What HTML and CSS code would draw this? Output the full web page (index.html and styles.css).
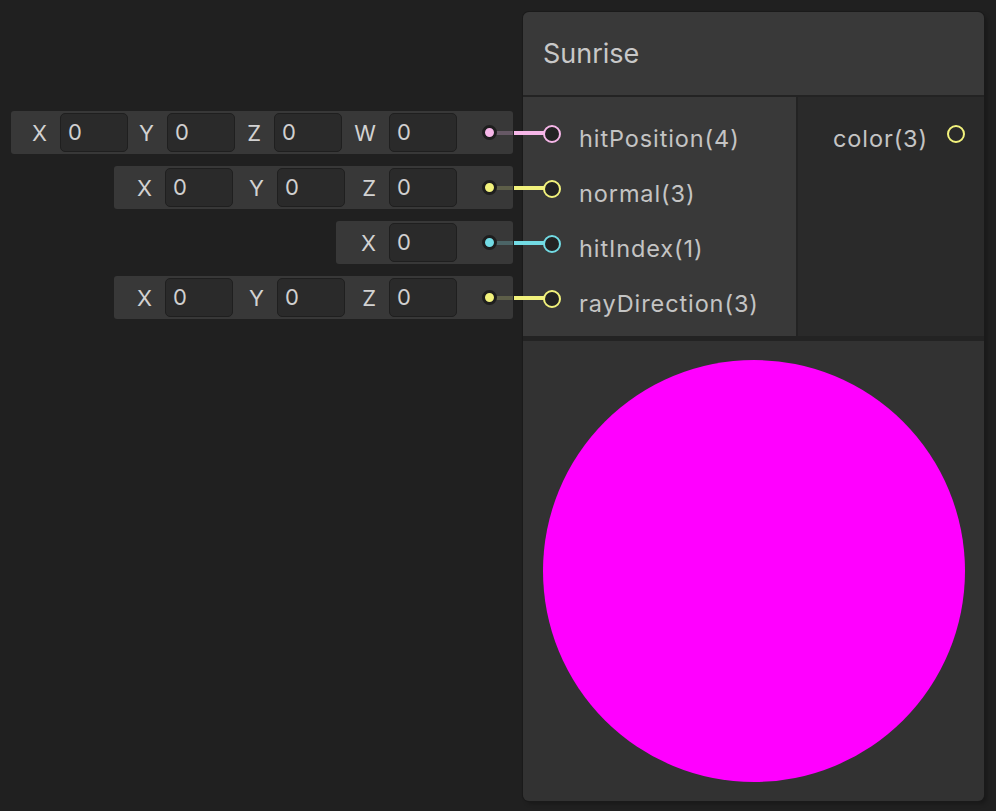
FILE: index.html
```html
<!DOCTYPE html>
<html>
<head>
<meta charset="utf-8">
<link rel="stylesheet" href="styles.css">
</head>
<body>
<div class="canvas">
  <div class="fields">
    <div class="bar vec4">
      <div class="grp"><span class="lbl">X</span><span class="fld">0</span></div>
      <div class="grp"><span class="lbl">Y</span><span class="fld">0</span></div>
      <div class="grp"><span class="lbl">Z</span><span class="fld">0</span></div>
      <div class="grp"><span class="lbl lbl-w">W</span><span class="fld">0</span></div>
      <div class="portarea pink"><span class="dot"></span><span class="wire-dim"></span><span class="wire"></span></div>
    </div>
    <div class="bar vec3">
      <div class="grp"><span class="lbl">X</span><span class="fld">0</span></div>
      <div class="grp"><span class="lbl">Y</span><span class="fld">0</span></div>
      <div class="grp"><span class="lbl">Z</span><span class="fld">0</span></div>
      <div class="portarea yellow"><span class="dot"></span><span class="wire-dim"></span><span class="wire"></span></div>
    </div>
    <div class="bar vec1">
      <div class="grp"><span class="lbl">X</span><span class="fld">0</span></div>
      <div class="portarea cyan"><span class="dot"></span><span class="wire-dim"></span><span class="wire"></span></div>
    </div>
    <div class="bar vec3">
      <div class="grp"><span class="lbl">X</span><span class="fld">0</span></div>
      <div class="grp"><span class="lbl">Y</span><span class="fld">0</span></div>
      <div class="grp"><span class="lbl">Z</span><span class="fld">0</span></div>
      <div class="portarea yellow"><span class="dot"></span><span class="wire-dim"></span><span class="wire"></span></div>
    </div>
  </div>

  <div class="node">
    <div class="header">Sunrise</div>
    <div class="ports">
      <div class="inputs">
        <div class="prow pink"><span class="pcircle"></span><span class="ptext">hitPosition(4)</span></div>
        <div class="prow yellow"><span class="pcircle"></span><span class="ptext">normal(3)</span></div>
        <div class="prow cyan"><span class="pcircle"></span><span class="ptext">hitIndex(1)</span></div>
        <div class="prow yellow"><span class="pcircle"></span><span class="ptext">rayDirection(3)</span></div>
      </div>
      <div class="outputs">
        <div class="orow yellow"><span class="ptext">color(3)</span><span class="pcircle open"></span></div>
      </div>
    </div>
    <div class="preview"><div class="disc"></div></div>
  </div>
</div>
</body>
</html>
```

FILE: styles.css
```css
html, body {
  margin: 0;
  padding: 0;
  background: #202020;
  width: 996px;
  height: 811px;
  overflow: hidden;
  font-family: Inter, "Noto Sans", sans-serif;
}

.canvas {
  display: flex;
  align-items: flex-start;
}

.fields {
  width: 513px;
  padding-top: 111px;
  display: flex;
  flex-direction: column;
  align-items: flex-end;
  gap: 12px;
}

.bar {
  display: flex;
  align-items: center;
  height: 43px;
  background: #383838;
  border-radius: 3px;
}

.vec4 { padding-left: 10px; }
.vec3 { padding-left: 7px; }
.vec1 { padding-left: 9px; }

.grp {
  display: flex;
  align-items: center;
}

.lbl {
  box-sizing: border-box;
  text-align: right;
  padding-right: 13px;
  color: #d2d2d2;
  font-size: 22px;
  width: 44px;
}

.vec4 .lbl { width: 39px; }
.vec4 .lbl-w { width: 47px; }

.fld {
  box-sizing: border-box;
  width: 68px;
  height: 39px;
  background: #2a2a2a;
  border: 1px solid #1f1f1f;
  border-radius: 5px;
  color: #d0d0d0;
  font-size: 22px;
  line-height: 37px;
  padding-left: 7px;
}

.portarea {
  position: relative;
  width: 56px;
  height: 43px;
  display: flex;
  align-items: center;
  padding-left: 25px;
  box-sizing: border-box;
}

.dot {
  position: relative;
  z-index: 2;
  box-sizing: border-box;
  width: 15px;
  height: 15px;
  border-radius: 50%;
  background: var(--c);
  border: 3.5px solid #1e1e1e;
}

.wire-dim {
  position: absolute;
  left: 38px;
  right: 0;
  top: 20px;
  height: 4px;
  background: var(--dim);
}

.wire {
  position: absolute;
  z-index: 3;
  left: 57px;
  width: 30px;
  top: 20px;
  height: 4px;
  background: var(--c);
}

.pink { --c: #f6b6e8; --dim: #665865; }
.yellow { --c: #f2f27c; --dim: #5d5e48; }
.cyan { --c: #72dbe4; --dim: #4b6466; }

.node {
  margin-left: 10px;
  margin-top: 12px;
  width: 461px;
  height: 789px;
  background: #232323;
  border-radius: 6px;
  box-shadow: 0 0 0 1px #1a1a1a, 3px 3px 4px rgba(0,0,0,0.25);
  display: flex;
  flex-direction: column;
  overflow: hidden;
}

.header {
  height: 83px;
  background: #393939;
  color: #c8c8c8;
  font-size: 27px;
  display: flex;
  align-items: center;
  padding-left: 20px;
  box-sizing: border-box;
}

.ports {
  margin-top: 2px;
  height: 239px;
  display: flex;
  gap: 2px;
}

.inputs {
  width: 273px;
  background: #393939;
  padding-top: 9px;
  box-sizing: border-box;
}

.outputs {
  flex: 1;
  background: #2a2a2a;
  padding-top: 9px;
  box-sizing: border-box;
}

.prow, .orow {
  height: 55px;
  display: flex;
  align-items: center;
}

.prow { padding-left: 20px; }
.orow { justify-content: flex-end; padding-right: 19px; }

.pcircle {
  box-sizing: border-box;
  width: 18px;
  height: 18px;
  border-radius: 50%;
  border: 2px solid var(--c);
  background: #232323;
  flex: none;
}

.pcircle.open { background: transparent; }

.ptext {
  color: #c4c4c4;
  font-size: 23.5px;
  letter-spacing: 0.9px;
  padding-top: 9px;
}

.prow .ptext { margin-left: 18px; }
.orow .ptext { margin-right: 19px; }

.preview {
  margin-top: 5px;
  flex: 1;
  background: #323232;
  display: flex;
  align-items: center;
  justify-content: center;
}

.disc {
  width: 422px;
  height: 422px;
  border-radius: 50%;
  background: #ff00ff;
}
```
